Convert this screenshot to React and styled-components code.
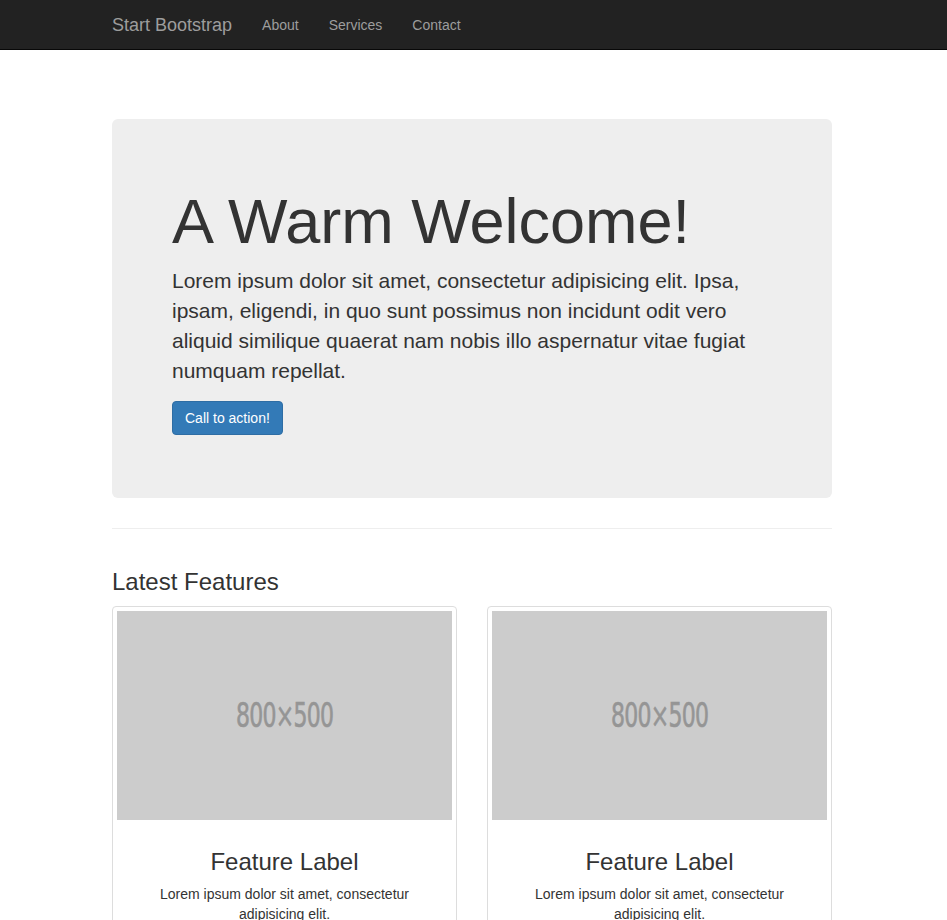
import React from 'react';
import styled, { createGlobalStyle } from 'styled-components';

const GlobalStyle = createGlobalStyle`
  html, body {
    margin: 0;
    padding: 0;
  }

  body {
    font-family: "Liberation Sans", Arial, sans-serif;
    font-size: 14px;
    line-height: 1.42857;
    color: #333;
    background: #fff;
  }

  * {
    box-sizing: border-box;
  }
`;

const Navbar = styled.nav`
  height: 50px;
  background: #222;
  border-bottom: 1px solid #080808;
`;

const NavInner = styled.div`
  width: 720px;
  margin-left: calc(50% - 361.5px);
  display: flex;
  align-items: center;
  height: 49px;
`;

const Brand = styled.a`
  font-size: 18px;
  line-height: 20px;
  padding: 15px 15px 14px;
  color: #9d9d9d;
  text-decoration: none;
  margin-left: -15px;
`;

const NavLink = styled.a`
  font-size: 14px;
  line-height: 20px;
  padding: 15px 15px 14px;
  color: #9d9d9d;
  text-decoration: none;
`;

const Container = styled.div`
  width: 720px;
  margin-left: calc(50% - 361.5px);
  padding-top: 69px;
`;

const Jumbotron = styled.header`
  background: #eee;
  border-radius: 6px;
  padding: 48px 60px;
  margin-bottom: 30px;

  h1 {
    font-size: 63px;
    line-height: 1.1;
    font-weight: 500;
    margin: 20px 0 10px;
    color: #333;
  }

  p {
    font-size: 21px;
    line-height: 30px;
    font-weight: 200;
    margin: 0 0 15px;
  }
`;

const ActionRow = styled.div`
  display: flex;
  gap: 4px;
  justify-content: ${(p) => (p.center ? 'center' : 'flex-start')};
  margin-bottom: ${(p) => (p.center ? '10px' : '15px')};
`;

const Button = styled.a`
  display: inline-block;
  font-size: 14px;
  line-height: 20px;
  padding: 6px 12px;
  border-radius: 4px;
  border: 1px solid ${(p) => (p.primary ? '#2e6da4' : '#ccc')};
  background: ${(p) => (p.primary ? '#337ab7' : '#fff')};
  color: ${(p) => (p.primary ? '#fff' : '#333')};
  text-decoration: none;
`;

const Divider = styled.hr`
  border: 0;
  border-top: 1px solid #eee;
  margin: 0 0 20px;
`;

const SectionTitle = styled.h3`
  font-size: 24px;
  line-height: 1.1;
  font-weight: 500;
  margin: 40px 0 10px;
`;

const FeatureGrid = styled.div`
  display: grid;
  grid-template-columns: 1fr 1fr;
  column-gap: 30px;
`;

const Thumbnail = styled.div`
  padding: 4px;
  border: 1px solid #ddd;
  border-radius: 4px;
  margin-bottom: 20px;
  text-align: center;
`;

const Placeholder = styled.div`
  height: 209px;
  background: #ccc;
  display: flex;
  align-items: center;
  justify-content: center;
  color: #959595;
  font-family: "DejaVu Sans Condensed", "DejaVu Sans", sans-serif;
  font-size: 33px;
  letter-spacing: -1px;
  -webkit-text-stroke: 0.6px #959595;

  span {
    display: inline-block;
    transform: scaleX(0.74);
  }
`;

const Caption = styled.div`
  padding: 9px;

  h3 {
    font-size: 24px;
    line-height: 1.1;
    font-weight: 500;
    margin: 20px 0 10px;
  }

  p {
    margin: 0 0 10px;
  }
`;

const features = [1, 2];

export default function App() {
  return (
    <>
      <GlobalStyle />
      <Navbar>
        <NavInner>
          <Brand href="#">Start Bootstrap</Brand>
          <NavLink href="#">About</NavLink>
          <NavLink href="#">Services</NavLink>
          <NavLink href="#">Contact</NavLink>
        </NavInner>
      </Navbar>
      <Container>
        <Jumbotron>
          <h1>A Warm Welcome!</h1>
          <p>
            Lorem ipsum dolor sit amet, consectetur adipisicing elit. Ipsa,
            ipsam, eligendi, in quo sunt possimus non incidunt odit vero
            aliquid similique quaerat nam nobis illo aspernatur vitae fugiat
            numquam repellat.
          </p>
          <ActionRow>
            <Button primary href="#">Call to action!</Button>
          </ActionRow>
        </Jumbotron>
        <Divider />
        <SectionTitle>Latest Features</SectionTitle>
        <FeatureGrid>
          {features.map((f) => (
            <Thumbnail key={f}>
              <Placeholder>
                <span>800×500</span>
              </Placeholder>
              <Caption>
                <h3>Feature Label</h3>
                <p>Lorem ipsum dolor sit amet, consectetur adipisicing elit.</p>
                <ActionRow center>
                  <Button primary href="#">Buy Now!</Button>
                  <Button href="#">More Info</Button>
                </ActionRow>
              </Caption>
            </Thumbnail>
          ))}
        </FeatureGrid>
      </Container>
    </>
  );
}
